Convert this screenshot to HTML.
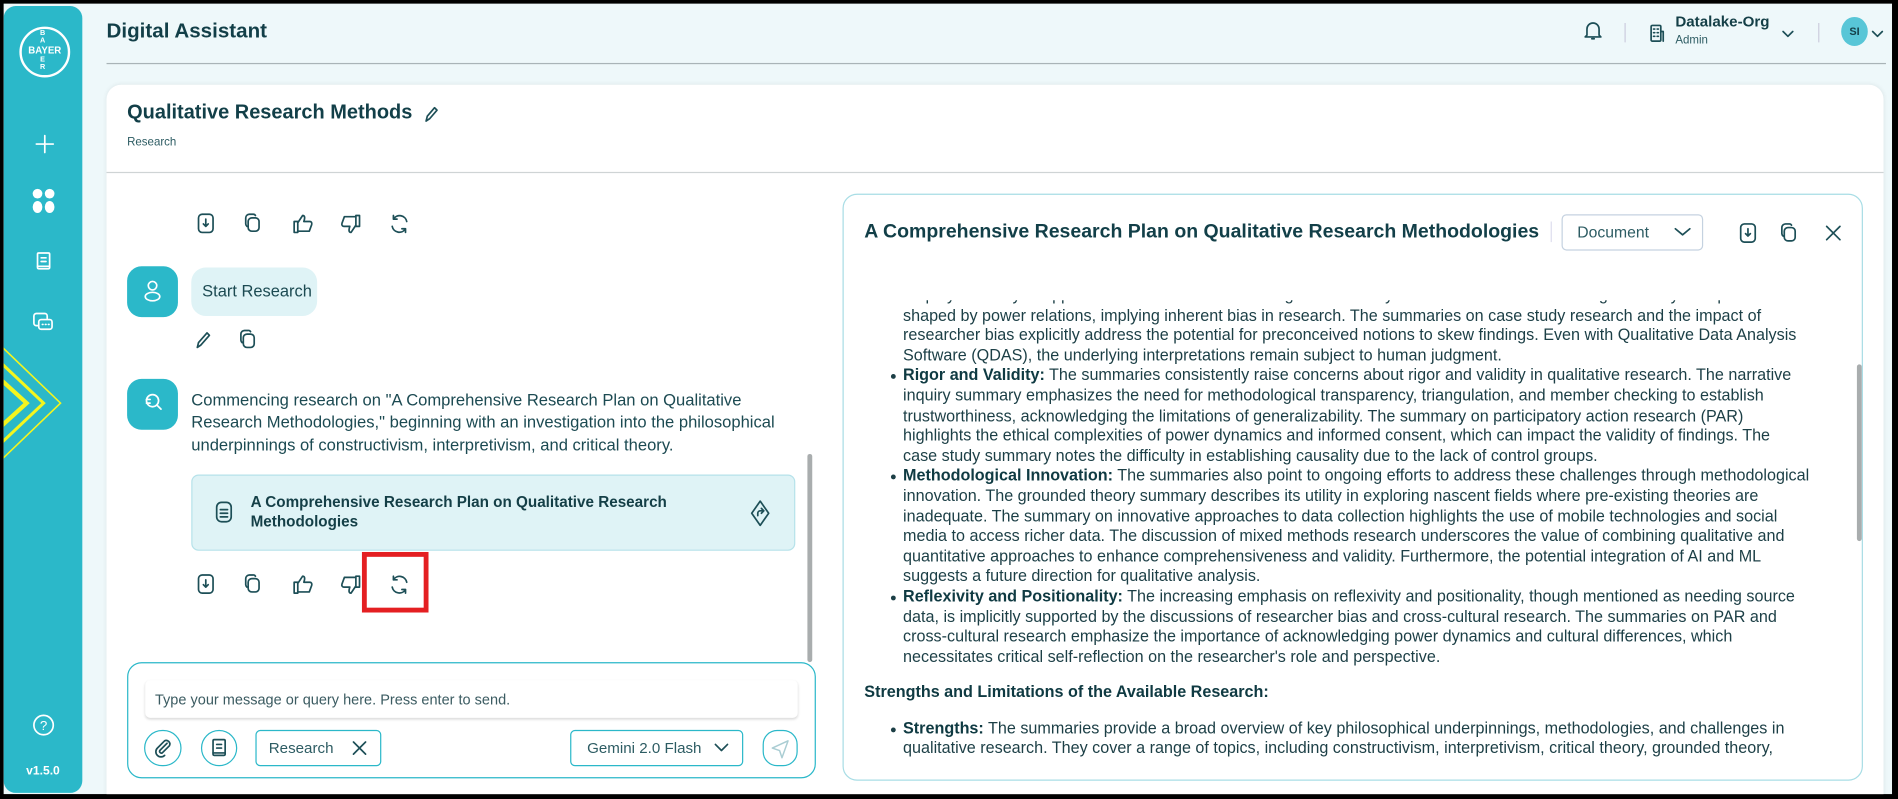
<!DOCTYPE html>
<html><head><meta charset="utf-8">
<style>
*{box-sizing:border-box;margin:0;padding:0}
html,body{width:1898px;height:799px;overflow:hidden;background:#000}
#w{position:absolute;left:0;top:0;width:1568px;height:660px;transform:scale(1.2105);transform-origin:0 0;background:#000;font-family:"Liberation Sans",sans-serif;color:#143f47}
#app{position:absolute;left:3px;top:3px;width:1560px;height:653px;background:#eef8fa;overflow:hidden}
.a{position:absolute}
#side{left:0;top:2px;width:65px;height:650px;background:#2bb8c9;border-radius:10px}
svg{position:absolute;overflow:visible}
.ic{stroke:#1d4f57;stroke-width:1.4;fill:none;stroke-linecap:round;stroke-linejoin:round}
.wi{stroke:#fff;stroke-width:1.4;fill:none;stroke-linecap:round;stroke-linejoin:round}
.t{white-space:nowrap}
#doc{left:706px;top:245px;width:820px;height:380px;overflow:hidden;font-size:13.35px;line-height:16.6px;color:#1c3f46}
#doc .in{position:absolute;left:37px;top:-12px;width:780px}
#doc b{color:#0f3a42}
.bl{position:relative}
.bl:before{content:"";position:absolute;left:-10px;top:7px;width:4px;height:4px;border-radius:2px;background:#1c3f46}
</style></head><body><div id="w"><div id="app">

<div id="side" class="a">
 <div class="a" style="left:13px;top:17px;width:42px;height:42px;border:2px solid #fff;border-radius:50%"></div>
 <div class="a t" style="left:14px;top:32px;width:40px;text-align:center;color:#fff;font-size:8px;font-weight:bold">BAYER</div>
 <div class="a t" style="left:30px;top:21px;color:#fff;font-size:6px;line-height:5.5px;font-weight:bold;text-align:center">B<br>A<br><br><br>E<br>R</div>
 <svg style="left:26px;top:106px" width="16" height="16"><path class="wi" d="M8 1v14M1 8h14"/></svg>
 <div class="a" style="left:24px;top:151px;width:8px;height:8px;border-radius:50%;background:#fff"></div>
 <div class="a" style="left:34px;top:151px;width:8px;height:8px;border-radius:50%;background:#fff"></div>
 <div class="a" style="left:24px;top:161px;width:8px;height:10px;border-radius:50%;background:#fff"></div>
 <div class="a" style="left:34px;top:161px;width:8px;height:10px;border-radius:50%;background:#fff"></div>
 <svg style="left:27px;top:203px" width="12" height="16"><rect class="wi" x="1" y="1" width="10" height="13" rx="1"/><path class="wi" d="M4 5h4M4 8h4M1 12h10"/></svg>
 <svg style="left:24px;top:253px" width="18" height="18"><path class="wi" d="M4 11H3a2 2 0 0 1-2-2V3a2 2 0 0 1 2-2h7a2 2 0 0 1 2 2v2"/><rect class="wi" x="5" y="6" width="11" height="8" rx="2"/><path class="wi" d="M8 10h.5M10.5 10h.5M13 10h.5"/></svg>
 <svg style="left:0;top:280px" width="60" height="100"><path d="M-3 0L47 48L-3 96" stroke="#f4f51e" stroke-width="1.3" fill="none"/><path d="M-3 14L33 48L-3 82" stroke="#f4f51e" stroke-width="2.5" fill="none"/><path d="M-3 28L19 48L-3 68" stroke="#f4f51e" stroke-width="3.5" fill="none"/></svg>
 <svg style="left:24px;top:585px" width="18" height="18"><circle class="wi" cx="9" cy="9" r="8"/><text x="9" y="13" text-anchor="middle" fill="#fff" font-size="11" font-family="Liberation Sans">?</text></svg>
 <div class="a t" style="left:0;top:627px;width:65px;text-align:center;color:#fff;font-size:10px;font-weight:bold">v1.5.0</div>
</div>

<div class="a t" style="left:85px;top:13px;font-size:17px;font-weight:bold;color:#123f48">Digital Assistant</div>
<div class="a" style="left:85px;top:49px;width:1470px;height:1px;background:#a9b4b7"></div>
<svg style="left:1305px;top:13px" width="16" height="18"><path class="ic" d="M3 13V8a5 5 0 0 1 10 0v5l1.5 1.5h-13zM7 16h2"/></svg>
<div class="a" style="left:1339px;top:16px;width:1px;height:16px;background:#ccd"></div>
<svg style="left:1359px;top:15px" width="14" height="18"><rect class="ic" x="2" y="3" width="8" height="13" rx="1"/><path class="ic" d="M4 6h1M7 6h1M4 9h1M7 9h1M4 12h1M7 12h1M10 8h2v8"/></svg>
<div class="a t" style="left:1381px;top:8px;font-size:12.5px;font-weight:bold">Datalake-Org</div>
<div class="a t" style="left:1381px;top:25px;font-size:9.5px;color:#2d5c63">Admin</div>
<svg style="left:1469px;top:22px" width="10" height="6"><path class="ic" d="M1 1l4 4 4-4" stroke-width="1"/></svg>
<div class="a" style="left:1499px;top:16px;width:1px;height:16px;background:#ccd"></div>
<div class="a" style="left:1518px;top:11px;width:22px;height:24px;border-radius:50%;background:#58c6d7;font-size:9px;font-weight:bold;text-align:center;line-height:24px">SI</div>
<svg style="left:1543px;top:22px" width="10" height="6"><path class="ic" d="M1 1l4 4 4-4" stroke-width="1"/></svg>

<div class="a" style="left:85px;top:67px;width:1468px;height:600px;background:#fff;border-radius:12px;box-shadow:0 0 4px rgba(0,0,0,.08)"></div>
<div class="a t" style="left:102px;top:81px;font-size:16.5px;font-weight:bold;color:#123f48">Qualitative Research Methods</div>
<svg style="left:347px;top:85px" width="12" height="14"><path class="ic" d="M2 12l1-4 6-7 2 2-6 7z" stroke-width="1.2"/></svg>
<div class="a t" style="left:102px;top:109px;font-size:9.5px;color:#2d5c63">Research</div>
<div class="a" style="left:85px;top:139px;width:1468px;height:1px;background:#cfd4d5"></div>

<svg style="left:158px;top:172px" width="180" height="20">
 <rect class="ic" x="3" y="2" width="12" height="15" rx="3"/><path class="ic" d="M9 6v6M7 10l2 2 2-2"/>
 <g transform="translate(40 0)"><rect class="ic" x="4" y="5" width="9" height="11" rx="3"/><path class="ic" d="M3 12a3 3 0 0 1-1-2V5a3 3 0 0 1 3-3h3a2 2 0 0 1 2 1"/></g>
 <g transform="translate(80 0)"><path class="ic" d="M2 8h3v9H2zM5 9l4-6c2 0 2 2 1 5h5c1 0 2 1 1.5 2.5l-2 5.5H5"/></g>
 <g transform="translate(120 0)"><path class="ic" d="M16 3h-3v9h3zM13 11l-4 6c-2 0-2-2-1-5H3c-1 0-2-1-1.5-2.5l2-5.5H13"/></g>
 <g transform="translate(160 0)"><path class="ic" d="M15 8a6 6 0 0 0-11-2M3 12a6 6 0 0 0 11 2M4 3v3h3M14 17v-3h-3"/></g>
</svg>
<div class="a" style="left:102px;top:217px;width:42px;height:42px;border-radius:12px;background:#2bb8c9"></div>
<svg style="left:114px;top:228px" width="18" height="20"><circle class="wi" cx="9" cy="5" r="3.5"/><ellipse class="wi" cx="9" cy="14" rx="6" ry="3.5"/></svg>
<div class="a t" style="left:155px;top:218px;width:104px;height:40px;border-radius:12px;background:#dff3f6;font-size:13.6px;line-height:40px;padding-left:9px;color:#1c4a52">Start Research</div>
<svg style="left:157px;top:268px" width="60" height="20"><path class="ic" d="M3 16l1-4 7-8 2 2-7 8z"/><g transform="translate(37 0)"><rect class="ic" x="4" y="5" width="9" height="11" rx="3"/><path class="ic" d="M3 12a3 3 0 0 1-1-2V5a3 3 0 0 1 3-3h3a2 2 0 0 1 2 1"/></g></svg>

<div class="a" style="left:102px;top:310px;width:42px;height:42px;border-radius:12px;background:#2bb8c9"></div>
<svg style="left:114px;top:320px" width="18" height="18"><circle class="wi" cx="9" cy="8" r="5"/><path class="wi" d="M12.5 11.5L16 15M4 7h3M4 10h3"/></svg>
<div class="a t" style="left:155px;top:319px;font-size:13.7px;line-height:18.3px;color:#1c4a52">Commencing research on "A Comprehensive Research Plan on Qualitative<br>Research Methodologies," beginning with an investigation into the philosophical<br>underpinnings of constructivism, interpretivism, and critical theory.</div>

<div class="a" style="left:155px;top:389px;width:499px;height:63px;background:#dff3f6;border:1px solid #b6e2ea;border-radius:6px"></div>
<svg style="left:175px;top:411px" width="14" height="18"><rect class="ic" x="1" y="1" width="12" height="16" rx="4"/><path class="ic" d="M4 7h6M4 10h6M4 13h6"/></svg>
<div class="a t" style="left:204px;top:404px;font-size:12.6px;line-height:16px;font-weight:bold;color:#143f47">A Comprehensive Research Plan on Qualitative Research<br>Methodologies</div>
<svg style="left:616px;top:410px" width="18" height="22"><path class="ic" d="M9 1l7 10-7 10-7-10z"/><path class="ic" d="M7 13v-2a2 2 0 0 1 2-2h2M10 7l2 2-2 2"/></svg>

<svg style="left:158px;top:470px" width="180" height="20">
 <rect class="ic" x="3" y="2" width="12" height="15" rx="3"/><path class="ic" d="M9 6v6M7 10l2 2 2-2"/>
 <g transform="translate(40 0)"><rect class="ic" x="4" y="5" width="9" height="11" rx="3"/><path class="ic" d="M3 12a3 3 0 0 1-1-2V5a3 3 0 0 1 3-3h3a2 2 0 0 1 2 1"/></g>
 <g transform="translate(80 0)"><path class="ic" d="M2 8h3v9H2zM5 9l4-6c2 0 2 2 1 5h5c1 0 2 1 1.5 2.5l-2 5.5H5"/></g>
 <g transform="translate(120 0)"><path class="ic" d="M16 3h-3v9h3zM13 11l-4 6c-2 0-2-2-1-5H3c-1 0-2-1-1.5-2.5l2-5.5H13"/></g>
 <g transform="translate(160 0)"><path class="ic" d="M15 8a6 6 0 0 0-11-2M3 12a6 6 0 0 0 11 2M4 3v3h3M14 17v-3h-3"/></g>
</svg>
<div class="a" style="left:296px;top:453px;width:55px;height:50px;border:4px solid #e41f22"></div>
<div class="a" style="left:664px;top:372px;width:4px;height:172px;border-radius:2px;background:#a9adae"></div>

<div class="a" style="left:102px;top:544px;width:569px;height:96px;border:1px solid #2bb8c9;border-radius:12px;background:#fff"></div>
<div class="a" style="left:117px;top:559px;width:539px;height:31px;background:#fff;box-shadow:0 1px 2px rgba(0,0,0,.15);border-radius:4px"></div>
<div class="a t" style="left:125px;top:568px;font-size:12px;color:#3b5b61">Type your message or query here. Press enter to send.</div>
<div class="a" style="left:116px;top:600px;width:31px;height:30px;border:1px solid #2bb8c9;border-radius:15px"></div>
<svg style="left:124px;top:607px" width="16" height="16"><path class="ic" d="M11 4l-6 6a1.5 1.5 0 0 0 2 2l6-6a3 3 0 0 0-4-4L3 8a4 4 0 0 0 6 6"/></svg>
<div class="a" style="left:163px;top:600px;width:30px;height:30px;border:1px solid #2bb8c9;border-radius:15px"></div>
<svg style="left:172px;top:607px" width="12" height="16"><rect class="ic" x="1" y="1" width="10" height="13" rx="1"/><path class="ic" d="M4 5h4M4 8h4M1 12h10"/></svg>
<div class="a t" style="left:208px;top:600px;width:104px;height:30px;border:1px solid #2bb8c9;border-radius:4px;font-size:12.5px;line-height:28px;padding-left:10px;color:#2d5c63">Research</div>
<svg style="left:288px;top:609px" width="12" height="12"><path class="ic" d="M1 1l10 10M11 1L1 11"/></svg>
<div class="a t" style="left:468px;top:600px;width:143px;height:30px;border:1px solid #2bb8c9;border-radius:4px;font-size:12.5px;line-height:28px;padding-left:13px;color:#2d5c63">Gemini 2.0 Flash</div>
<svg style="left:587px;top:611px" width="12" height="8"><path class="ic" d="M1 1l5 5 5-5"/></svg>
<div class="a" style="left:627px;top:600px;width:29px;height:30px;border:1px solid #2bb8c9;border-radius:12px"></div>
<svg style="left:633px;top:607px" width="18" height="18"><path d="M15 2L2 8l6 2 2 6z" stroke="#aacdd3" stroke-width="1.2" fill="none" stroke-linejoin="round"/></svg>

<div class="a" style="left:693px;top:157px;width:843px;height:485px;border:1px solid #a8dde5;border-radius:12px;background:#fff"></div>
<div class="a t" style="left:711px;top:179px;font-size:16.1px;font-weight:bold;color:#123f48">A Comprehensive Research Plan on Qualitative Research Methodologies</div>
<div class="a" style="left:1278px;top:180px;width:1px;height:17px;background:#dde"></div>
<div class="a t" style="left:1287px;top:174px;width:117px;height:30px;border:1px solid #c5d2e0;border-radius:4px;font-size:13px;line-height:28px;padding-left:12px;color:#2d5c63">Document</div>
<svg style="left:1380px;top:185px" width="14" height="8"><path class="ic" d="M1 1l6 5 6-5" stroke-width="1.2"/></svg>
<svg style="left:1434px;top:180px" width="90" height="20"><rect class="ic" x="1" y="2" width="12" height="15" rx="3"/><path class="ic" d="M7 6v6M5 10l2 2 2-2"/><g transform="translate(33 0)"><rect class="ic" x="4" y="5" width="9" height="11" rx="3"/><path class="ic" d="M3 12a3 3 0 0 1-1-2V5a3 3 0 0 1 3-3h3a2 2 0 0 1 2 1"/></g><path class="ic" d="M72 4l11 11M83 4L72 15"/></svg>
<div class="a" style="left:1531px;top:298px;width:4px;height:146px;border-radius:2px;background:#a9adae"></div>

<div id="doc" class="a"><div class="in t">
<div class="bl" style="height:16.6px;overflow:hidden">employ a variety of approaches and methods including critical theory which stresses that knowledge is always shaped</div>
<div>shaped by power relations, implying inherent bias in research. The summaries on case study research and the impact of</div>
<div>researcher bias explicitly address the potential for preconceived notions to skew findings. Even with Qualitative Data Analysis</div>
<div>Software (QDAS), the underlying interpretations remain subject to human judgment.</div>
<div class="bl"><b>Rigor and Validity:</b> The summaries consistently raise concerns about rigor and validity in qualitative research. The narrative</div>
<div>inquiry summary emphasizes the need for methodological transparency, triangulation, and member checking to establish</div>
<div>trustworthiness, acknowledging the limitations of generalizability. The summary on participatory action research (PAR)</div>
<div>highlights the ethical complexities of power dynamics and informed consent, which can impact the validity of findings. The</div>
<div>case study summary notes the difficulty in establishing causality due to the lack of control groups.</div>
<div class="bl"><b>Methodological Innovation:</b> The summaries also point to ongoing efforts to address these challenges through methodological</div>
<div>innovation. The grounded theory summary describes its utility in exploring nascent fields where pre-existing theories are</div>
<div>inadequate. The summary on innovative approaches to data collection highlights the use of mobile technologies and social</div>
<div>media to access richer data. The discussion of mixed methods research underscores the value of combining qualitative and</div>
<div>quantitative approaches to enhance comprehensiveness and validity. Furthermore, the potential integration of AI and ML</div>
<div>suggests a future direction for qualitative analysis.</div>
<div class="bl"><b>Reflexivity and Positionality:</b> The increasing emphasis on reflexivity and positionality, though mentioned as needing source</div>
<div>data, is implicitly supported by the discussions of researcher bias and cross-cultural research. The summaries on PAR and</div>
<div>cross-cultural research emphasize the importance of acknowledging power dynamics and cultural differences, which</div>
<div>necessitates critical self-reflection on the researcher's role and perspective.</div>
<div style="margin:13px 0 13px -32px"><b>Strengths and Limitations of the Available Research:</b></div>
<div class="bl"><b>Strengths:</b> The summaries provide a broad overview of key philosophical underpinnings, methodologies, and challenges in</div>
<div>qualitative research. They cover a range of topics, including constructivism, interpretivism, critical theory, grounded theory,</div>
</div></div>

</div></div></body></html>
